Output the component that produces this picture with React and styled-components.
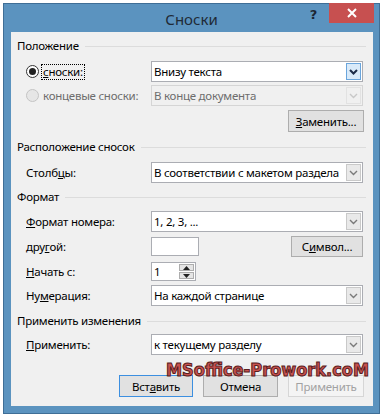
import React from 'react'
import styled, { createGlobalStyle } from 'styled-components'

const GlobalStyle = createGlobalStyle`
  html, body {
    margin: 0;
    padding: 0;
    background: #ffffff;
  }
  body {
    font-family: "Noto Sans", "Open Sans", sans-serif;
    font-size: 11.5px;
    letter-spacing: -0.25px;
    color: #000;
  }
`

const Chevron = ({ color = '#7a7a7a', bold }) => (
   <svg width="9" height="6" viewBox="0 0 9 6">
      <path d="M1 1 L4.5 4.5 L8 1" fill="none" stroke={color} strokeWidth={bold ? 2 : 1.4} />
   </svg>
)

const ComboBox = ({ value, active, disabled }) => (
   <Combo $disabled={disabled}>
      <ComboText>{value}</ComboText>
      <DropButton $active={active} $disabled={disabled}>
         <Chevron color={active ? '#1c2c48' : disabled ? '#c8c8c8' : '#7a7a7a'} bold={active} />
      </DropButton>
   </Combo>
)

const Section = ({ title, top }) => (
   <Header $mt={top}>
      <span>{title}</span>
      <HeaderLine />
   </Header>
)

const App = () => {
   return (
      <>
         <GlobalStyle />
         <Window>
            <TitleBar>
               <span />
               <Title>Сноски</Title>
               <TitleButtons>
                  <Help>?</Help>
                  <Close>
                     <svg width="10" height="10" viewBox="0 0 10 10">
                        <path d="M1 1 L9 9 M9 1 L1 9" stroke="#fff" strokeWidth="2" />
                     </svg>
                  </Close>
               </TitleButtons>
            </TitleBar>
            <Body>
               <Section title="Положение" top={0} />
               <Field $mt={7}>
                  <RadioLabel>
                     <Radio $checked />
                     <FocusText $focused><u>с</u>носки:</FocusText>
                  </RadioLabel>
                  <ComboBox value="Внизу текста" active />
               </Field>
               <Field $mt={3}>
                  <RadioLabel $disabled>
                     <Radio $disabled />
                     <FocusText>концевые сноски:</FocusText>
                  </RadioLabel>
                  <ComboBox value="В конце документа" disabled />
               </Field>
               <Field $mt={4}>
                  <span />
                  <ButtonEnd>
                     <Button $w={76}><u>З</u>аменить...</Button>
                  </ButtonEnd>
               </Field>

               <Section title="Расположение сносок" top={7} />
               <Field $mt={7}>
                  <Label>Столб<u>ц</u>ы:</Label>
                  <ComboBox value="В соответствии с макетом раздела" />
               </Field>

               <Section title="Формат" top={6} />
               <Field $mt={6}>
                  <Label><u>Ф</u>ормат номера:</Label>
                  <ComboBox value="1, 2, 3, ..." />
               </Field>
               <Field $mt={4}>
                  <Label>дру<u>г</u>ой:</Label>
                  <Split>
                     <TextInput />
                     <Button $w={72} $h={21}>С<u>и</u>мвол...</Button>
                  </Split>
               </Field>
               <Field $mt={5}>
                  <Label><u>Н</u>ачать с:</Label>
                  <Spin>
                     <SpinValue>1</SpinValue>
                     <SpinButtons>
                        <SpinArrow>
                           <svg width="7" height="4" viewBox="0 0 7 4"><path d="M0 4 L3.5 0 L7 4 Z" fill="#222" /></svg>
                        </SpinArrow>
                        <SpinArrow>
                           <svg width="7" height="4" viewBox="0 0 7 4"><path d="M0 0 L3.5 4 L7 0 Z" fill="#222" /></svg>
                        </SpinArrow>
                     </SpinButtons>
                  </Spin>
               </Field>
               <Field $mt={4}>
                  <Label>Ну<u>м</u>ерация:</Label>
                  <ComboBox value="На каждой странице" />
               </Field>

               <Section title="Применить изменения" top={7} />
               <Field $mt={5}>
                  <Label><u>П</u>рименить:</Label>
                  <ComboBox value="к текущему разделу" />
               </Field>

               <Footer>
                  <Button $w={74} $default>Вст<u>а</u>вить</Button>
                  <Button $w={75}>Отмена</Button>
                  <Button $w={76} $disabled>Применить</Button>
               </Footer>

               <Watermark>MSoffice-Prowork.coM</Watermark>
            </Body>
         </Window>
      </>
   )
}

const Window = styled.div`
     margin: 3px 0 0 3px;
     width: 377px;
     height: 411px;
     box-sizing: border-box;
     border: 1px solid #3f6e96;
     background: #5b93bf;
     display: flex;
     flex-direction: column;
     padding: 0 6px 7px 7px;
`

const TitleBar = styled.div`
     height: 28px;
     margin-left: -7px;
     margin-right: -6px;
     display: grid;
     grid-template-columns: 1fr auto 1fr;
`

const Title = styled.div`
     font-size: 15px;
     letter-spacing: 0;
     line-height: 28px;
     color: #1f2a36;
     padding-top: 1px;
`

const TitleButtons = styled.div`
     display: flex;
     justify-content: flex-end;
     align-items: flex-start;
     padding-right: 5px;
`

const Help = styled.span`
     font-family: "DejaVu Sans", sans-serif;
     font-weight: bold;
     font-size: 13px;
     color: #1c2633;
     margin: 3px 12px 0 0;
`

const Close = styled.div`
     width: 45px;
     height: 20px;
     margin-top: -1px;
     background: #c75050;
     display: flex;
     align-items: center;
     justify-content: center;
`

const Body = styled.div`
     position: relative;
     flex: 1;
     background: #f0f0f0;
     padding: 6px 7px 0 6px;
`

const Header = styled.div`
     display: flex;
     align-items: center;
     gap: 6px;
     height: 16px;
     line-height: 16px;
     margin-top: ${p => p.$mt}px;
     white-space: nowrap;
`

const HeaderLine = styled.div`
     flex: 1;
     height: 1px;
     background: #dcdcdc;
`

const Field = styled.div`
     display: grid;
     grid-template-columns: 125px 1fr;
     align-items: center;
     padding: 0 3px 0 9px;
     margin-top: ${p => p.$mt}px;
`

const Label = styled.span`
     white-space: nowrap;
`

const RadioLabel = styled.span`
     display: flex;
     align-items: center;
     gap: 2px;
     white-space: nowrap;
     color: ${p => p.$disabled ? '#6d6d6d' : '#000'};
`

const Radio = styled.span`
     width: 13px;
     height: 13px;
     box-sizing: border-box;
     border-radius: 50%;
     border: 1px solid ${p => p.$disabled ? '#c4c4c4' : '#333'};
     background: ${p => p.$disabled ? '#e6e6e6' : '#fff'};
     display: flex;
     align-items: center;
     justify-content: center;
     &::after {
        content: '';
        width: 7px;
        height: 7px;
        border-radius: 50%;
        background: #222;
        display: ${p => p.$checked ? 'block' : 'none'};
     }
`

const FocusText = styled.span`
     border: 1px dotted ${p => p.$focused ? '#000' : 'transparent'};
     padding: 0 1px;
     line-height: 14px;
`

const Combo = styled.div`
     display: flex;
     height: 21px;
     box-sizing: border-box;
     border: 1px solid ${p => p.$disabled ? '#d5d5d5' : '#abadb3'};
     background: ${p => p.$disabled ? '#f0f0f0' : '#fff'};
     color: ${p => p.$disabled ? '#6d6d6d' : '#000'};
`

const ComboText = styled.span`
     flex: 1;
     padding-left: 2px;
     line-height: 19px;
     white-space: nowrap;
     overflow: hidden;
`

const DropButton = styled.span`
     width: 15px;
     margin: 1px;
     box-sizing: border-box;
     display: flex;
     align-items: center;
     justify-content: center;
     border: 1px solid ${p => p.$active ? '#6aa5dc' : p.$disabled ? '#e2e2e2' : '#c9c9c9'};
     background: ${p => p.$active ? '#d9eaf9' : p.$disabled ? '#f0f0f0' : '#e9e9e9'};
`

const ButtonEnd = styled.div`
     display: flex;
     justify-content: flex-end;
     margin-right: -1px;
`

const Button = styled.div`
     width: ${p => p.$w}px;
     height: ${p => p.$h || 22}px;
     box-sizing: border-box;
     border: 1px solid ${p => p.$default ? '#3c8fe0' : p.$disabled ? '#d6d6d6' : '#adadad'};
     background: ${p => p.$disabled ? '#f4f4f4' : '#e1e1e1'};
     color: ${p => p.$disabled ? '#a2a2a2' : '#000'};
     display: flex;
     align-items: center;
     justify-content: center;
     white-space: nowrap;
`

const Split = styled.div`
     display: flex;
     justify-content: space-between;
     align-items: center;
`

const TextInput = styled.div`
     width: 48px;
     height: 19px;
     box-sizing: border-box;
     border: 1px solid #abadb3;
     background: #fff;
`

const Spin = styled.div`
     width: 45px;
     height: 19px;
     box-sizing: border-box;
     border: 1px solid #abadb3;
     background: #fff;
     display: flex;
`

const SpinValue = styled.span`
     flex: 1;
     padding-left: 2px;
     line-height: 17px;
`

const SpinButtons = styled.div`
     width: 15px;
     display: flex;
     flex-direction: column;
     gap: 1px;
     padding: 1px;
`

const SpinArrow = styled.div`
     flex: 1;
     box-sizing: border-box;
     border: 1px solid #adadad;
     background: #e5e5e5;
     display: flex;
     align-items: center;
     justify-content: center;
`

const Footer = styled.div`
     display: flex;
     justify-content: flex-end;
     gap: 10px;
     margin-top: 20px;
     padding-right: 2px;
`

const Watermark = styled.div`
     position: absolute;
     left: 155px;
     top: 328px;
     font-family: "DejaVu Sans Condensed", "DejaVu Sans", sans-serif;
     font-weight: bold;
     font-size: 18px;
     letter-spacing: 0;
     line-height: 20px;
     color: #c9524f;
     -webkit-text-stroke: 1px #5a1d1d;
     white-space: nowrap;
     pointer-events: none;
`

export default App
